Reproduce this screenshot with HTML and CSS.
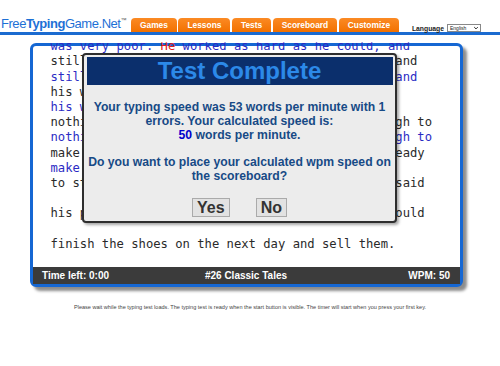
FILE: index.html
```html
<!doctype html>
<html lang="en">

<head>
  <meta charset="UTF-8" />
  <meta name="viewport" content="width=device-width, initial-scale=1.0" />
  <title>Typing Test - FreeTypingGame.Net</title>
  <link rel="stylesheet" href="styles.css">
</head>

<body>
  <header class="top-bar">
    <div class="logo">Free<b>Typing</b>Game.Net<sup>™</sup></div>
    <nav class="main-nav">
      <a href="#">Games</a>
      <a href="#">Lessons</a>
      <a href="#">Tests</a>
      <a href="#">Scoreboard</a>
      <a href="#">Customize</a>
    </nav>
    <div class="language">
      <span>Language</span>
      <span class="lang-select">English
        <svg viewBox="0 0 10 10">
          <path d="M2 3.5L5 6.5L8 3.5" />
        </svg>
      </span>
    </div>
  </header>

  <div class="test-box">
    <div class="text-lines">
      <div class="typed">was very poor. <span class="wrong">He</span> worked as hard as he could, and</div>
      <div>still he could not earn enough to keep himself and</div>
      <div class="typed">still he could not earn enough to keep himself and</div>
      <div>his wife. At last he was so poor that he had</div>
      <div class="typed">his wife. At last he was so poor that he had</div>
      <div>nothing left in the world but just leather enough to</div>
      <div class="typed">nothing left in the world but just leather enough to</div>
      <div>make just one pair of shoes. He cut them out, ready</div>
      <div class="typed">make just one pair of</div>
      <div>to stitch the next morning. He went to bed and said</div>
      <div class="typed"> </div>
      <div>his prayers and went to sleep, hoping that he could</div>
      <div class="typed"> </div>
      <div>finish the shoes on the next day and sell them.</div>
      <div class="typed"> </div>
    </div>

    <div class="status-bar">
      <span>Time left: 0:00</span>
      <span class="test-name">#26 Classic Tales</span>
      <span class="wpm">WPM: 50</span>
    </div>

    <div class="result-dialog">
      <h2 class="dialog-title">Test Complete</h2>
      <p class="dialog-text">Your typing speed was 53 words per minute with 1<br>errors. Your calculated speed is:<br><span class="speed">50</span> words per minute.</p>
      <p class="dialog-text">Do you want to place your calculated wpm speed on<br>the scoreboard?</p>
      <div class="dialog-buttons">
        <button>Yes</button>
        <button>No</button>
      </div>
    </div>
  </div>

  <p class="load-note">Please wait while the typing test loads. The typing test is ready when the start button is visible. The timer will start when you press your first key.</p>
</body>

</html>
```

FILE: styles.css
```css
* {
  box-sizing: border-box;
}

body {
  margin: 0;
  width: 500px;
  background: #fff;
  font-family: "Liberation Sans", Arial, sans-serif;
}

.top-bar {
  display: flex;
  align-items: flex-end;
  height: 35px;
  border-bottom: 3px solid #1b6bd0;
}

.logo {
  width: 131px;
  padding-left: 1px;
  margin-bottom: 1px;
  font-size: 13px;
  line-height: 15px;
  letter-spacing: -0.45px;
  color: #1d70d6;
  white-space: nowrap;
}

.logo sup {
  font-size: 6px;
  color: #555;
  vertical-align: 6px;
}

.main-nav {
  display: flex;
  gap: 1.5px;
}

.main-nav a {
  height: 14.5px;
  padding: 0 9px;
  line-height: 15px;
  font-size: 8.4px;
  font-weight: bold;
  color: #fff;
  text-decoration: none;
  background: linear-gradient(#fb8a24, #f27100);
  border-radius: 4px 4px 0 0;
}

.language {
  display: flex;
  align-items: center;
  gap: 3px;
  margin-left: auto;
  margin-right: 19px;
  height: 8px;
  font-size: 6.8px;
  font-weight: bold;
  color: #222;
}

.lang-select {
  display: flex;
  align-items: center;
  justify-content: space-between;
  width: 34px;
  height: 8px;
  padding: 0 1px 0 2px;
  border: 1px solid #888;
  background: #fff;
  font-size: 5px;
  font-weight: normal;
}

.lang-select svg {
  width: 6px;
  height: 6px;
  fill: none;
  stroke: #222;
  stroke-width: 1.6;
}

.test-box {
  position: relative;
  width: 433px;
  margin: 8px 0 0 30px;
  border: 3px solid #1567d3;
  border-radius: 6px;
  background: #fff;
  box-shadow: 4px 4px 3px rgba(0, 0, 0, 0.45);
}

.text-lines {
  margin-top: -6.8px;
  padding-left: 17.5px;
  font-family: "DejaVu Sans Mono", monospace;
  font-size: 12.2px;
  line-height: 15.2px;
  color: #2a2a2a;
  clip-path: inset(3px 0 0 0);
}

.text-lines div {
  height: 15.2px;
  white-space: pre;
}

.text-lines .typed {
  color: #2b2bc4;
}

.text-lines .wrong {
  color: #e02020;
}

.status-bar {
  display: grid;
  grid-template-columns: 1fr auto 1fr;
  align-items: center;
  height: 17px;
  padding: 0 10px 0 9px;
  background: #3b3b3b;
  color: #fff;
  font-size: 10px;
  font-weight: bold;
}

.status-bar .wpm {
  text-align: right;
}

.result-dialog {
  position: absolute;
  left: 49px;
  top: 7px;
  width: 315px;
  padding: 2px 2.5px 4px;
  border: 2px solid #2e2e2e;
  border-radius: 4px;
  background: #ececec;
  box-shadow: 2px 2px 3px rgba(0, 0, 0, 0.35);
  text-align: center;
}

.dialog-title {
  height: 28px;
  margin: 0;
  background: #0b2f6c;
  color: #2c89e8;
  font-size: 24px;
  line-height: 28px;
}

.dialog-text {
  margin: 14.5px 0 0;
  font-size: 12.2px;
  font-weight: bold;
  line-height: 14.4px;
  color: #174a86;
  white-space: nowrap;
}

.dialog-text + .dialog-text {
  margin-top: 11.8px;
}

.dialog-text .speed {
  color: #0000cc;
}

.dialog-buttons {
  display: flex;
  justify-content: center;
  gap: 26px;
  margin-top: 14.7px;
}

.dialog-buttons button {
  height: 19px;
  padding: 0 4px;
  border: 1px solid #aaa;
  background: #e2e2e2;
  color: #333;
  font-family: inherit;
  font-size: 16px;
  font-weight: bold;
  line-height: 17px;
}

.load-note {
  margin: 16.5px 0 0;
  text-align: center;
  font-size: 5.55px;
  line-height: 6.5px;
  color: #444;
}
```
